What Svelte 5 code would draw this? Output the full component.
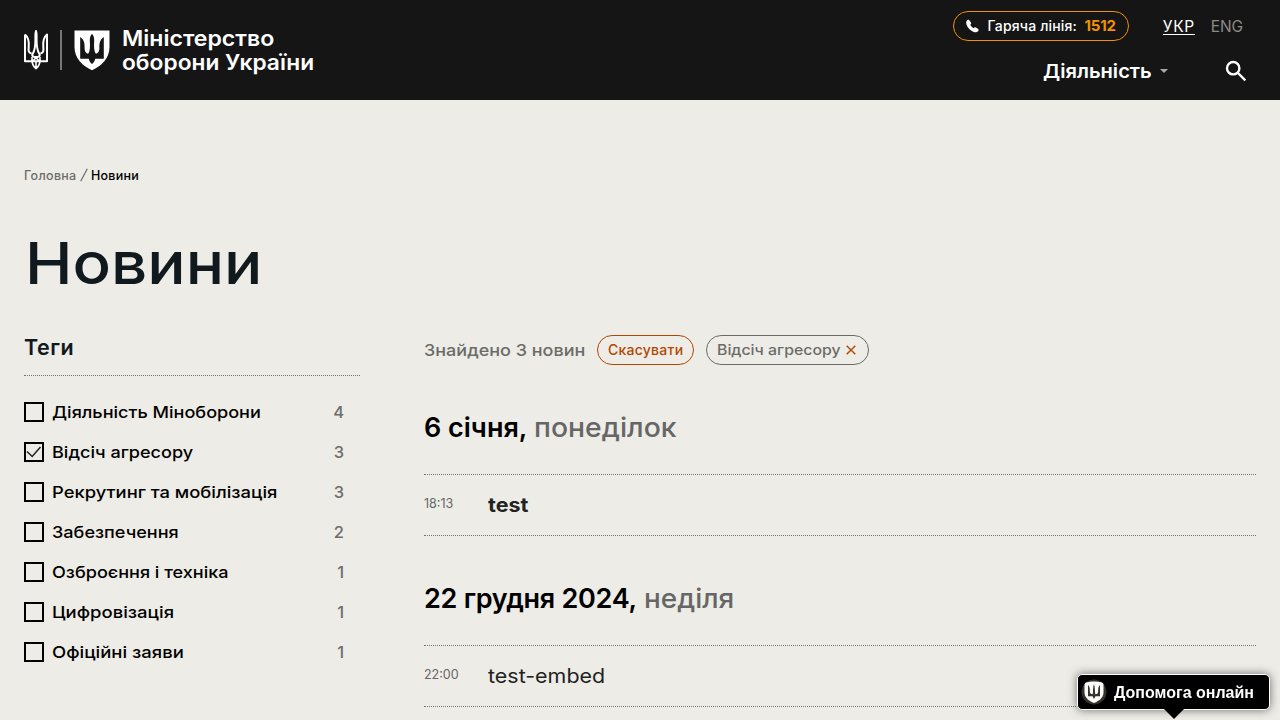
<script>
  const tags = [
    ['Діяльність Міноборони', 4, false],
    ['Відсіч агресору', 3, true],
    ['Рекрутинг та мобілізація', 3, false],
    ['Забезпечення', 2, false],
    ['Озброєння і техніка', 1, false],
    ['Цифровізація', 1, false],
    ['Офіційні заяви', 1, false],
  ];
  const days = [
    { date: '6 січня,', weekday: 'понеділок', time: '18:13', title: 'test', strong: true },
    { date: '22 грудня 2024,', weekday: 'неділя', time: '22:00', title: 'test-embed', strong: false },
  ];
</script>

<header>
  <a class="brand" href="#home">
    <svg class="trident" width="24" height="41" viewBox="0 0 24 41" fill="none" stroke="#fff" stroke-width="2" stroke-linejoin="round">
      <path d="M12 1C11.200 3 11.300 5 11.400 8C11.500 15 11.400 20 8.800 23.500C7.500 25.500 8.800 27.200 12 27.200C15.200 27.200 16.500 25.500 15.200 23.500C12.600 20 12.500 15 12.600 8C12.700 5 12.800 3 12 1Z" />
      <path d="M1 4.500V31.300H23V4.500C19.200 7.500 18.900 12 19.300 17C19.500 20 20 22.800 16.400 23.600M1 4.500C4.800 7.500 5.100 12 4.700 17C4.500 20 4 22.800 7.600 23.600" />
      <path d="M12 26C12 28 10.500 30 8 31.300C8.500 35 10 37 12 38.600C14 37 15.500 35 16 31.300C13.500 30 12 28 12 26M8 27V31M16 27V31M12 31V38" stroke-width="1.600" />
    </svg>
    <span class="divider"></span>
    <svg class="shield" width="36" height="41" viewBox="0 0 36 41">
      <path fill="#fff" d="M.5 .5H35.500V17C35.500 29 27 36 18 40.300C9 36 .5 29 .5 17Z" />
      <path fill="#151515" d="M6.200 7C9.800 9.500 10.900 13 10.600 18C10.500 21 12 23.800 14.400 23.600C16 21 16.200 16 15.800 11C15.700 8 16.400 5.500 18 3.800C19.600 5.500 20.300 8 20.200 11C19.800 16 20 21 21.600 23.600C24 23.800 25.500 21 25.400 18C25.100 13 26.200 9.500 29.800 7V28.800H21.300C20.800 31 19.600 32.700 18 34C16.400 32.700 15.200 31 14.700 28.800H6.200Z" />
    </svg>
    <span class="brand-name"><span class="wide b1">Міністерство</span><span class="wide b2">оборони України</span></span>
  </a>
  <div class="tools">
    <div class="top">
      <a class="hotline" href="#call">
        <svg width="14" height="14" viewBox="0 0 14 14"><path fill="#fff" d="M1.200.8C2 .1 3 .2 3.600.8L5.400 3.200C5.900 3.900 5.700 4.600 4.700 5.600C5.200 7.100 6.800 8.700 8.400 9.400C9.300 8.300 10.100 8.200 10.900 8.700L13.300 10.400C14 11 13.900 12 13.200 12.800C12 14 10.300 14.200 8.500 13.500C4.800 12 1.800 9 .5 5.300C-.1 3.500.2 1.700 1.200.8Z" /></svg>
        <span class="hl">Гаряча лінія:</span><b>1512</b>
      </a>
      <span class="ukr">УКР</span><span class="eng">ENG</span>
    </div>
    <div class="menu">
      <span class="wide nav">Діяльність</span><i class="caret"></i>
      <svg class="search" width="22" height="22" viewBox="0 0 22 22" fill="none" stroke="#fff" stroke-width="2.400"><circle cx="8.200" cy="8.200" r="6.200" /><path d="M12.500 12.500L20.300 20.300" /></svg>
    </div>
  </div>
</header>

<main>
  <nav class="crumbs"><span class="c1">Головна</span><svg width="8" height="14" viewBox="0 0 8 14"><path d="M.7 13.200L7.300.8" stroke="#6d6d6b" stroke-width="1.200" /></svg><span class="c2">Новини</span></nav>
  <h1><span class="wide">Новини</span></h1>
  <div class="columns">
    <aside>
      <h2><span>Теги</span></h2>
      <ul>
        {#each tags as [name, count, checked], i}
          <li>
            <span class="box">{#if checked}<svg width="16" height="16" viewBox="0 0 16 16"><path d="M1 7.500L6.200 12.500L14.500 3" fill="none" stroke="#222" stroke-width="1.500" /></svg>{/if}</span>
            <span class="wide tag t{i}">{name}</span><span class="count">{count}</span>
          </li>
        {/each}
      </ul>
    </aside>
    <section>
      <div class="filters">
        <span class="wide found">Знайдено 3 новин</span>
        <button class="reset"><span>Скасувати</span></button>
        <button class="chip"><span class="wide">Відсіч агресору</span><svg width="10" height="10" viewBox="0 0 10 10"><path d="M.7.7L9.300 9.300M9.300.7L.7 9.300" stroke="#b34700" stroke-width="1.400" /></svg></button>
      </div>
      {#each days as d, i}
        <article>
          <h3><span class="d{i}">{d.date}</span><span class="wide weekday w{i}">{d.weekday}</span></h3>
          <div class="item">
            <time>{d.time}</time><span class="wide title" class:strong={d.strong}>{d.title}</span>
          </div>
        </article>
      {/each}
    </section>
  </div>
</main>

<button class="help">
  <svg width="26" height="26" viewBox="0 0 26 26">
    <circle cx="13" cy="13" r="12.500" fill="#35332a" />
    <path fill="#fff" d="M5 3.500C10 2.300 16 2.300 21 3.500C22 4 22.500 5 22.500 6V14C22 19 18 22 13 24C8 22 4 19 3.500 14V6C3.500 5 4 4 5 3.500Z" />
    <path fill="#35332a" d="M7 6C8.600 7.500 8.900 9 8.800 12C8.800 14 9.600 15.300 11.700 15.300C12.300 12 11.800 8 13 5C14.200 8 13.700 12 14.300 15.300C16.400 15.300 17.200 14 17.200 12C17.100 9 17.400 7.500 19 6V17.300H14.500L13 20L11.500 17.300H7Z" />
  </svg>
  <span>Допомога онлайн</span>
</button>

<style>
  :global(body) { background: #edece6; overflow: hidden; height: 720px; }
  :global(#app) { font-family: Inter, 'Liberation Sans', sans-serif; color: #000; }
  span, time, b { white-space: nowrap; }
  a { color: inherit; text-decoration: none; }
  .wide { display: inline-block; transform-origin: 0 50%; transform: scaleX(var(--stretch, 1.09)); }
  header { height: 100px; background: #151515; color: #fff; display: flex; justify-content: space-between; padding: 0 24px; box-sizing: border-box; }
  .brand { display: flex; align-items: center; }
  .divider { width: 2px; height: 40px; background: #777; margin: 0 12px; }
  .brand-name { display: flex; flex-direction: column; margin: -1px 0 0 12px; font-weight: 600; font-size: 21.500px; line-height: 24px; }
  .b1 { --stretch: 1.073; }
  .b2 { --stretch: 1.058; }
  .tools { display: flex; flex-direction: column; padding-top: 11px; }
  .top { display: flex; align-items: center; height: 30px; }
  .hotline { box-sizing: border-box; width: 176px; height: 30px; border: 1px solid #f29100; border-radius: 15px; display: flex; align-items: center; padding: 0 12px; }
  .hl { margin: 0 8px 0 9px; font-size: 14px; font-weight: 500; width: 89px; letter-spacing: .16px; }
  .hl, .hotline b { padding-bottom: 2px; }
  .hotline b { color: #f29100; font-size: 15px; font-weight: 700; letter-spacing: -.2px; }
  .ukr { margin-left: 34px; width: 32px; font-size: 15.500px; letter-spacing: .7px; line-height: 16px; padding-top: 1px; height: 16px; box-shadow: inset 0 -1px #fff; }
  .eng { margin: 0 14px 0 16px; font-size: 15.500px; letter-spacing: -.1px; color: #8c8b85; }
  .top { margin-right: -1px; }
  .menu { display: flex; align-items: center; height: 30px; margin: 15px 8px 0 90px; }
  .nav { font-size: 19px; font-weight: 600; width: 108px; --stretch: 1.06; }
  .caret { border: 4px solid transparent; border-top-color: #aaa; border-bottom: 0; margin-left: 9px; }
  .search { margin: 0 1px 0 auto; }
  main { padding: 0 24px; }
  .crumbs { display: flex; align-items: center; height: 20px; margin-top: 65px; font-size: 12.500px; }
  .crumbs svg { margin: 0 3px 0 4px; }
  .c1 { color: #6d6d6b; width: 52px; letter-spacing: .3px; font-weight: 500; }
  .c2 { font-weight: 500; letter-spacing: .25px; }
  h1 { margin: 38px 0 0 1px; height: 80px; line-height: 80px; font-size: 58px; font-weight: 500; color: #10191d; --stretch: 1.1; }
  .columns { display: grid; grid-template-columns: 336px 832px; gap: 64px; }
  h2 { margin: 28px 0 0; height: 45px; line-height: 33px; font-size: 21.500px; font-weight: 600; color: #10191d; letter-spacing: .5px; box-sizing: border-box; border-bottom: 1px dotted #737371; }
  ul { list-style: none; margin: 16px 0 0; padding: 0; }
  li { height: 40px; display: flex; align-items: center; font-size: 16.500px; font-weight: 500; }
  .box { box-sizing: border-box; width: 20px; height: 20px; border: 2px solid #000; margin-right: 8px; }
  .box svg { display: block; }
  .tag { --stretch: 1.095; }
  .t2 { --stretch: 1.114; }
  .t5, .t6 { --stretch: 1.12; }
  .count { margin: 0 16px 0 auto; color: #6d6d6b; }
  .filters { display: flex; align-items: center; gap: 12px; height: 30px; margin-top: 32px; color: #6b6b69; }
  .found { width: 161px; font-size: 16.500px; font-weight: 500; }
  button { font: inherit; }
  .reset, .chip { background: none; color: #6b6b69; border: 1px solid #6b6b69; height: 30px; border-radius: 15px; padding: 0 10px; box-sizing: border-box; display: flex; align-items: center; font-size: 14px; }
  .reset span, .chip span { padding-bottom: 2px; }
  .reset { width: 97px; color: #b34700; border-color: #b34700; font-weight: 500; letter-spacing: .25px; }
  .chip { width: 163px; justify-content: space-between; padding-right: 12px; font-size: 14.500px; font-weight: 500; --stretch: 1.09; }
  h3 { margin: 0; height: 109px; box-sizing: border-box; padding-top: 43px; line-height: 40px; font-size: 27px; font-weight: 600; }
  .d1 { letter-spacing: -.27px; }
  .weekday { color: #666; font-weight: 500; margin-left: 7px; }
  .w0 { --stretch: 1.05; }
  .w1 { --stretch: 1.035; }
  .item { height: 62px; box-sizing: border-box; border: dotted #737371; border-width: 1px 0; display: flex; align-items: center; }
  time { width: 64px; font-size: 12.500px; color: #666; padding-bottom: 3px; }
  .title { font-size: 19.500px; color: #222; --stretch: 1.1; }
  .strong { font-weight: 700; }
  .help { position: fixed; left: 1077px; top: 674px; width: 193px; height: 36px; box-sizing: border-box; border: 1px solid #fff; border-radius: 5px; background: #000; color: #fff; display: flex; align-items: center; padding: 0 0 0 3px; gap: 7px; font: bold 16px 'Liberation Sans', sans-serif; box-shadow: 0 0 10px #0008; }
  .help span { padding-top: 1px; }
  .help::after { content: ''; position: absolute; top: 34px; left: 86px; border: 10px solid transparent; border-top-color: #000; border-bottom: 0; }
</style>
